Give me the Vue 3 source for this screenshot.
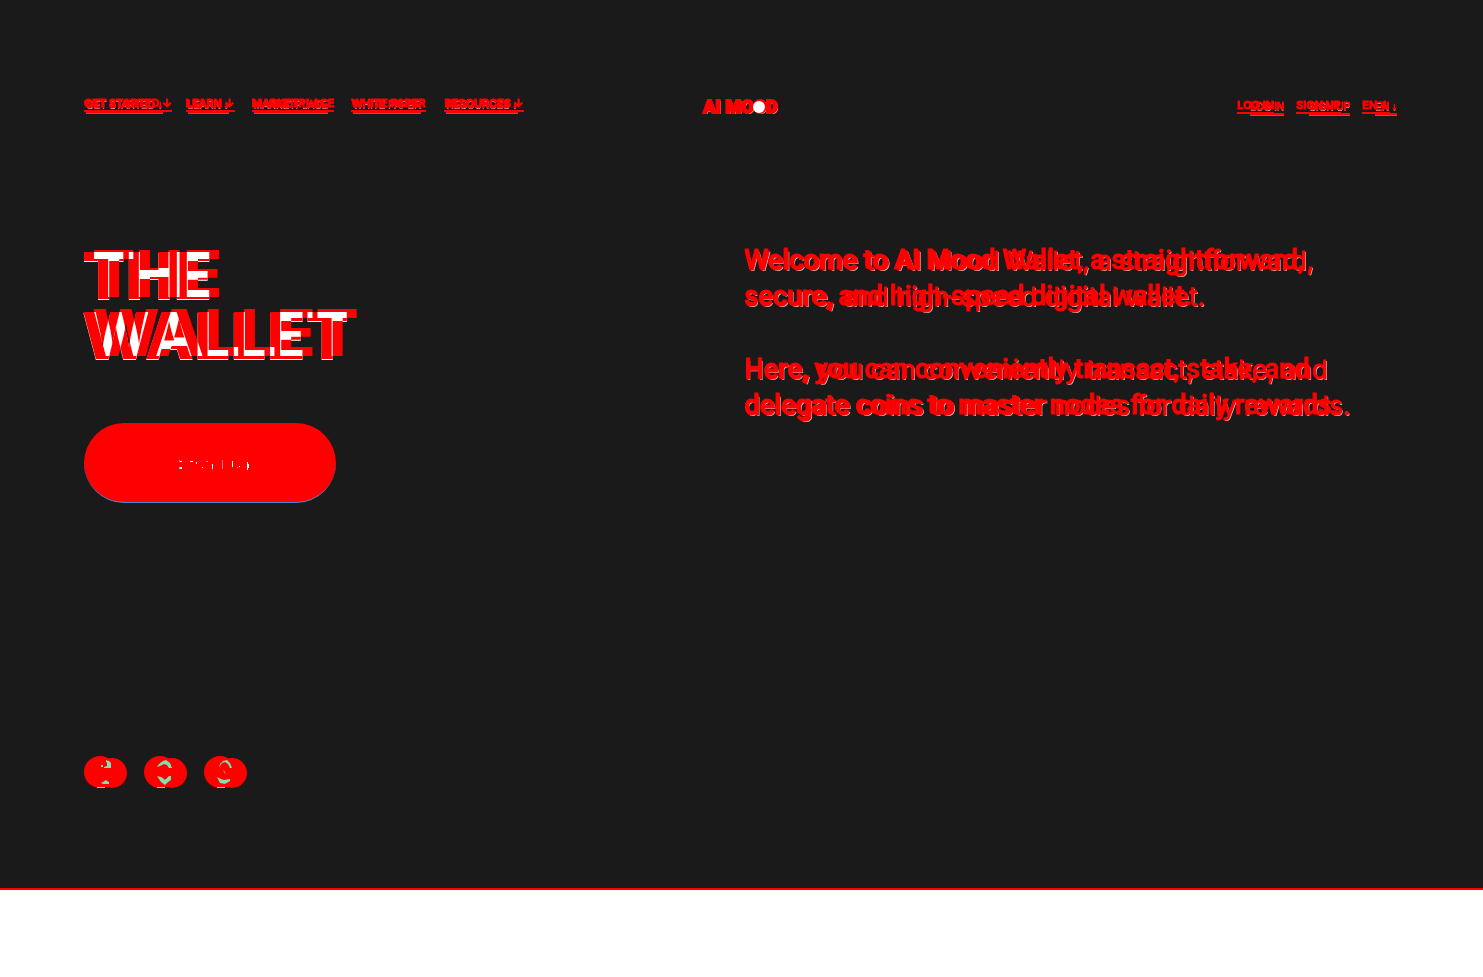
<script setup>
const links = [
  { label: 'GET STARTED ↓' },
  { label: 'LEARN ↓' },
  { label: 'MARKETPLACE' },
  { label: 'WHITE PAPER' },
  { label: 'RESOURCES ↓' },
]
const account = [{ label: 'LOG IN' }, { label: 'SIGN UP' }, { label: 'EN ↓' }]
const title = 'THE\nWALLET'
const lines = [
  ['Welcome to AI Mood Wallet, a straightforward,', 'secure, and high-speed digital wallet.'],
  ['Here, you can conveniently transact, stake, and', 'delegate coins to master nodes for daily rewards.'],
]
const socials = [
  { name: 'Facebook', path: 'M22 4l3 1 2 2v5h-7v-1l3-1v-3l-1-1zM17 9h2v2h-2zM17 27l2-1 3-2 1 1 2 1v2h-6z' },
  { name: 'Telegram', path: 'M13 11l2-3 4-3 3-1 4 3 2 5h-3l-2-3-3-1-4 2zM13 20l4 1 3 2 1 1 4-4h2v4l-3 2-3 3-4-3z' },
  { name: 'Instagram', path: 'M15 12l1-4 3-3 4-1 3 3 2 5h-2l-2-4-3-2-3 1-2 3zM19 14l2 2 1 2-2-2zM13 21l4 2 3 1 6-1v2l-5 3-5-1z' },
]
</script>

<template>
  <div class="page">
    <section class="hero">
      <header class="bar">
        <nav class="links" aria-label="Main">
          <a v-for="l in links" :key="l.label" href="#" class="link" :data-text="l.label">{{ l.label }}</a>
        </nav>
        <a href="#" class="logo">AI MOOD</a>
        <nav class="links account" aria-label="Account">
          <a v-for="l in account" :key="l.label" href="#" class="link" :data-text="l.label">{{ l.label }}</a>
        </nav>
      </header>
      <main class="content">
        <div class="lead">
          <h1 class="title" :data-text="title"><span class="ink">{{ title }}</span><span class="overlap" aria-hidden="true" :data-text="title"></span></h1>
          <button type="button" class="cta">
            <span>Sign Up</span>
            <svg class="specks" viewBox="0 0 252 80" aria-hidden="true">
              <path fill="#fff" d="M96 38h2v1h-2zM96 44h2v2h-2zM106 38h3v1h-3zM112 39h1v2h-1zM118 44h1v1h-1zM128 41h1v5h-1zM148 38h1v6h-1zM155 43h1v1h-1zM163 39h1v8h-1zM164 41h1v4h-1z" />
              <path fill="#6aa5ef" d="M95 37h1v2h-1zM95 44h1v2h-1zM122 38h2v1h-2zM153 44h1v1h-1z" />
              <path fill="#d87a9a" d="M138 37h1v9h-1z" />
            </svg>
          </button>
        </div>
        <div class="copy">
          <p v-for="(p, i) in lines" :key="i" class="para">
            <span v-for="t in p" :key="t" class="line" :data-text="t">{{ t }}</span>
          </p>
        </div>
      </main>
      <footer class="socials">
        <a v-for="s in socials" :key="s.name" href="#" :aria-label="s.name">
          <svg width="44" height="32" viewBox="0 0 44 32" aria-hidden="true">
            <circle cx="16" cy="16" r="16" fill="red" />
            <circle cx="28" cy="17" r="15" fill="red" />
            <path d="M13 31h8v1h-8z" fill="#7de2ae" />
            <path :d="s.path" fill="#7de2ae" />
          </svg>
        </a>
      </footer>
    </section>
  </div>
</template>

<style>
body { background: #fff; }
</style>

<style scoped>
.page { font-family: Inter, "Liberation Sans", sans-serif; }
.hero {
  background: #1a1a1a;
  border-bottom: 2px solid red;
  padding: 96px 86px 100px 84px;
}
.bar { display: grid; grid-template-columns: 1fr auto 1fr; align-items: start; }
.links { display: flex; gap: 25px; padding-left: 2px; }
.account { justify-content: flex-end; padding: 2px 0 0; }
.link {
  position: relative;
  font: 400 10px/18px "Liberation Sans", Arial, sans-serif;
  color: red;
  text-decoration: none;
  text-shadow: 0 1px #ddd;
  border-bottom: 1px solid #3f6fd0;
  box-shadow: inset 0 -2px red;
  height: 17px;
  white-space: nowrap;
  -webkit-text-stroke: 1px red;
}
.link::after {
  content: attr(data-text);
  position: absolute;
  left: -2px;
  top: 0;
  height: 14px;
  font: 600 11px/14px Inter, sans-serif;
  text-shadow: none;
  border-bottom: 2px solid red;
}
.account .link::after { left: -13px; }
.logo {
  position: relative;
  font: 900 18px/22px Roboto, sans-serif;
  color: red;
  text-decoration: none;
  text-shadow: 1px 1px #fff;
  -webkit-text-stroke: 2px red;
}
.logo::after {
  content: "";
  position: absolute;
  right: 13px;
  top: 5px;
  width: 12px;
  height: 12px;
  border-radius: 50%;
  background: #fff;
}
.content { display: grid; grid-template-columns: 1fr 1fr; padding-top: 125px; }
.lead { padding-top: 3px; }
.title {
  position: relative;
  margin: 0 0 0 -2px;
  font: 800 64px/60px Inter, sans-serif;
  white-space: pre;
}
.ink { color: red; text-shadow: 0 1px #fff; }
.title::after,
.overlap::after {
  content: attr(data-text);
  position: absolute;
  left: 0;
  top: -2px;
  padding-left: 10px;
  line-height: 59px;
}
.title::after { color: red; }
.overlap {
  position: absolute;
  inset: 0;
  z-index: 1;
  mix-blend-mode: lighten;
}
.overlap::before,
.overlap::after { color: #fff; background: #000; }
.overlap::before { content: attr(data-text); position: absolute; inset: 0; }
.overlap::after { mix-blend-mode: multiply; right: 0; bottom: 0; }
.cta {
  position: relative;
  display: block;
  margin-top: 57px;
  width: 252px;
  height: 80px;
  border: 0;
  border-bottom: 1px solid #4a86d8;
  border-radius: 40px;
  background: red;
  color: red;
  font: 600 14px/20px Inter, sans-serif;
}
.specks { position: absolute; left: 0; top: 0; width: 252px; height: 80px; }
.copy { padding-left: 4px; }
.para { margin: 0 0 37px; font: 400 26px/36px Inter, sans-serif; color: red; }
.line {
  position: relative;
  display: block;
  white-space: nowrap;
  text-shadow: 1px 1px #ccc;
  -webkit-text-stroke: 1px red;
}
.line::after {
  content: attr(data-text);
  position: absolute;
  left: 0;
  top: -1px;
  font: 500 27px/36px Roboto, sans-serif;
  text-shadow: none;
}
.socials { display: flex; gap: 16px; margin-top: 253px; }
.socials a, .socials svg { display: block; }
</style>
